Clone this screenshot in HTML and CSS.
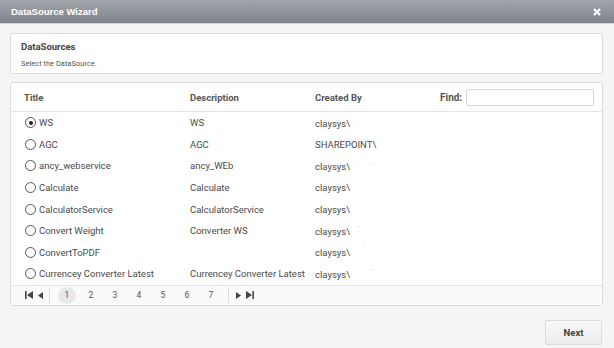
FILE: index.html
```html
<!DOCTYPE html>
<html lang="en">
<head>
    <meta charset="UTF-8">
    <title>DataSource Wizard</title>
    <link rel="stylesheet" href="styles.css">
</head>
<body>

    <!-- Title Bar -->
    <div class="titlebar">
        <span>DataSource Wizard</span>
        <svg class="close" width="8" height="8" viewBox="0 0 8 8"><path d="M1 1L7 7M7 1L1 7" stroke="#fff" stroke-width="2.2"/></svg>
    </div>

    <div class="content">
        <!-- Step Info -->
        <div class="info">
            <h4>DataSources</h4>
            <p>Select the DataSource.</p>
        </div>

        <!-- Grid -->
        <div class="grid">
            <div class="grid-head">
                <div class="col-title">Title</div>
                <div class="col-desc">Description</div>
                <div class="col-by">Created By</div>
                <div class="find">Find: <input type="text"></div>
            </div>

            <div class="row">
                <div class="col-title"><span class="radio checked"></span>WS</div>
                <div class="col-desc">WS</div>
                <div class="col-by">claysys\<span class="blur">·</span></div>
            </div>
            <div class="row">
                <div class="col-title"><span class="radio"></span>AGC</div>
                <div class="col-desc">AGC</div>
                <div class="col-by">SHAREPOINT\</div>
            </div>
            <div class="row">
                <div class="col-title"><span class="radio"></span>ancy_webservice</div>
                <div class="col-desc">ancy_WEb</div>
                <div class="col-by">claysys\<span class="blur">˙ &nbsp; &nbsp; &nbsp; · ·</span></div>
            </div>
            <div class="row">
                <div class="col-title"><span class="radio"></span>Calculate</div>
                <div class="col-desc">Calculate</div>
                <div class="col-by">claysys\</div>
            </div>
            <div class="row">
                <div class="col-title"><span class="radio"></span>CalculatorService</div>
                <div class="col-desc">CalculatorService</div>
                <div class="col-by">claysys\</div>
            </div>
            <div class="row">
                <div class="col-title"><span class="radio"></span>Convert Weight</div>
                <div class="col-desc">Converter WS</div>
                <div class="col-by">claysys\<span class="blur">˙˙</span></div>
            </div>
            <div class="row">
                <div class="col-title"><span class="radio"></span>ConvertToPDF</div>
                <div class="col-desc"></div>
                <div class="col-by">claysys\<span class="blur">&nbsp; &nbsp; ˙</span></div>
            </div>
            <div class="row">
                <div class="col-title"><span class="radio"></span>Currencey Converter Latest</div>
                <div class="col-desc">Currencey Converter Latest</div>
                <div class="col-by">claysys\<span class="blur">&nbsp; &nbsp; &nbsp; &nbsp; ˙˙</span></div>
            </div>

            <!-- Pager -->
            <div class="pager">
                <div class="pager-nav">
                    <svg width="8" height="8" viewBox="0 0 8 8"><rect x="0" y="0" width="1.6" height="8" fill="#444"/><path d="M8 0L2 4L8 8Z" fill="#444"/></svg>
                    <svg width="5" height="7" viewBox="0 0 5 7"><path d="M5 0L0 3.5L5 7Z" fill="#444"/></svg>
                </div>
                <div class="pages">
                    <span class="page active">1</span>
                    <span class="page">2</span>
                    <span class="page">3</span>
                    <span class="page">4</span>
                    <span class="page">5</span>
                    <span class="page">6</span>
                    <span class="page">7</span>
                </div>
                <div class="pager-nav right">
                    <svg width="5" height="7" viewBox="0 0 5 7"><path d="M0 0L5 3.5L0 7Z" fill="#444"/></svg>
                    <svg width="8" height="8" viewBox="0 0 8 8"><path d="M0 0L6 4L0 8Z" fill="#444"/><rect x="6.4" y="0" width="1.6" height="8" fill="#444"/></svg>
                </div>
            </div>
        </div>

        <div class="footer">
            <button class="next">Next</button>
        </div>
    </div>

</body>
</html>
```

FILE: styles.css
```css
body {
    font-family: Roboto, "Liberation Sans", sans-serif;
    margin: 0;
    padding: 0;
    background-color: #f5f5f5;
    color: #4a4a4a;
}

.titlebar {
    height: 23px;
    display: flex;
    align-items: center;
    justify-content: space-between;
    padding: 0 13px 0 11px;
    background: linear-gradient(#a2a5aa, #7f838a);
    color: white;
    font-family: "Liberation Sans", Arial, sans-serif;
    font-size: 9.5px;
    font-weight: bold;
    border-bottom: 1px solid #d6d6d6;
}

.content {
    padding: 9px 11px 0 10px;
}

.info {
    background-color: white;
    border: 1px solid #dcdcdc;
    border-radius: 3px;
    height: 39px;
    padding: 0 10px;
}

.info h4 {
    margin: 7px 0 0;
    font-size: 9.5px;
    font-weight: bold;
    color: #444;
}

.info p {
    margin: 7px 0 0;
    font-size: 7.5px;
    color: #555;
}

.grid {
    margin-top: 8px;
    background-color: white;
    border: 1px solid #dcdcdc;
    border-radius: 3px;
    font-size: 9.5px;
}

.grid-head,
.row {
    display: flex;
    align-items: center;
    padding-left: 13px;
}

.grid-head {
    height: 28px;
    border-bottom: 1px solid #e4e4e4;
    font-weight: bold;
    color: #555;
}

.row {
    height: 21.6px;
}

.col-title {
    width: 166px;
    display: flex;
    align-items: center;
}

.col-desc {
    width: 125px;
    white-space: nowrap;
}

.col-by {
    width: 125px;
}

.blur {
    color: #bbb;
    font-size: 7px;
    vertical-align: super;
    margin-left: 6px;
}

.find {
    display: flex;
    align-items: center;
    gap: 4px;
    font-size: 10px;
}

.find input {
    width: 128px;
    height: 17px;
    box-sizing: border-box;
    border: 1px solid #d8d8d8;
    border-radius: 2px;
    padding: 0;
    margin: 0;
}

.radio {
    width: 11px;
    height: 11px;
    border: 1px solid #555;
    border-radius: 50%;
    margin: 0 3px 0 1px;
    position: relative;
    box-sizing: border-box;
    flex-shrink: 0;
}

.radio.checked::after {
    content: "";
    position: absolute;
    left: 2.5px;
    top: 2.5px;
    width: 4px;
    height: 4px;
    border-radius: 50%;
    background-color: #222;
}

.pager {
    height: 19px;
    border-top: 1px solid #e4e4e4;
    background-color: #fafafa;
    display: flex;
    align-items: center;
    font-size: 8.5px;
    color: #555;
}

.pager-nav {
    display: flex;
    align-items: center;
    gap: 5px;
    padding: 0 6px 0 14px;
    height: 15px;
    border-right: 1px solid #ddd;
}

.pager-nav.right {
    border-right: none;
    border-left: 1px solid #ddd;
    padding: 0 0 0 7px;
    gap: 5px;
}

.pages {
    display: flex;
    align-items: center;
    padding: 0 2px 0 8px;
}

.page {
    width: 18px;
    height: 17px;
    line-height: 17px;
    text-align: center;
    margin-right: 6px;
    border-radius: 50%;
}

.page.active {
    background-color: #e8e8e8;
}

.footer {
    display: flex;
    justify-content: flex-end;
    padding-top: 14px;
}

.next {
    width: 57px;
    height: 25px;
    border: 1px solid #dcdcdc;
    border-radius: 2px;
    background: linear-gradient(#f9f9f9, #ececec);
    font-family: Roboto, sans-serif;
    font-size: 9.5px;
    font-weight: bold;
    color: #444;
    margin-right: 1px;
}
```
